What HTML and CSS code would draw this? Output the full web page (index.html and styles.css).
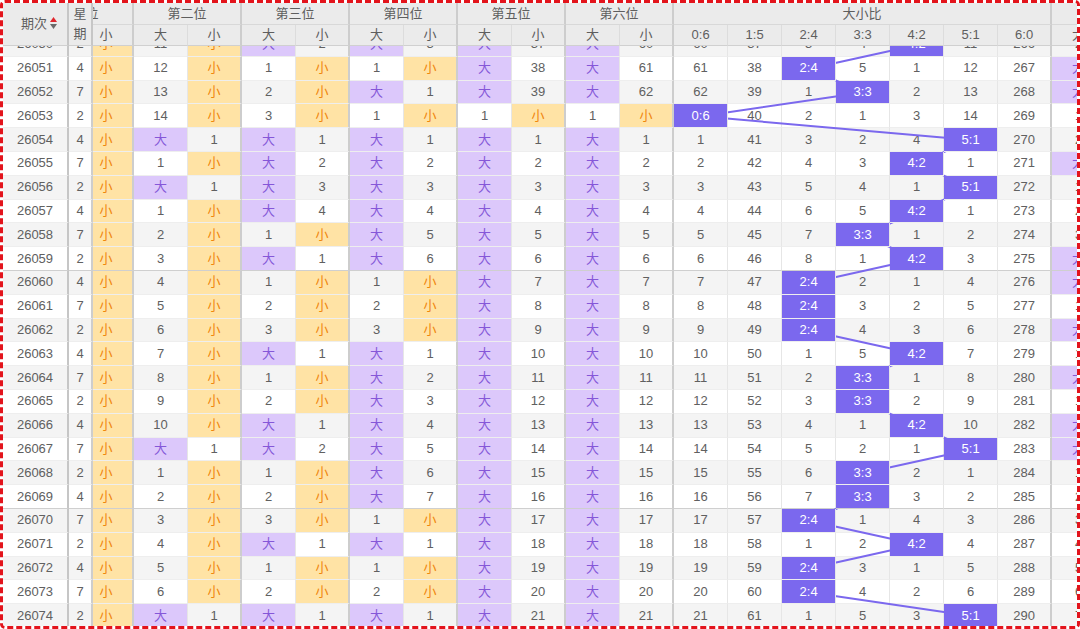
FILE: index.html
```html
<!DOCTYPE html>
<html lang="zh-CN">
<head>
<meta charset="utf-8">
<title>大小比走势</title>
<link rel="stylesheet" href="styles.css">
</head>
<body>
<div class="frame">
<div class="scroller" id="scroller">
<div class="sheet" id="sheet">
<svg class="trend" id="trend" width="1224" height="640"><polyline class="trend-line" id="trendLine" points=""/></svg>
<table class="grid">
<colgroup><col class="cp"><col class="cw"><col class="c"><col class="c"><col class="c"><col class="c"><col class="c"><col class="c"><col class="c"><col class="c"><col class="c"><col class="c"><col class="c"><col class="c"><col class="c"><col class="c"><col class="c"><col class="c"><col class="c"><col class="c"><col class="c"><col class="c"><col class="c"></colgroup>
<thead>
<tr class="r1">
<th rowspan="2" class="fz1 hp">期次<svg class="sort" width="7" height="12" viewBox="0 0 7 12"><polygon points="0,5 3.5,0 7,5" fill="#e0262d"/><polygon points="0,7 7,7 3.5,12" fill="#6a6a6a"/></svg></th>
<th rowspan="2" class="fz2 hw">星期</th>
<th colspan="2">第一位</th>
<th colspan="2">第二位</th>
<th colspan="2">第三位</th>
<th colspan="2">第四位</th>
<th colspan="2">第五位</th>
<th colspan="2">第六位</th>
<th colspan="7">大小比</th>
<th colspan="2">和值</th>
</tr>
<tr class="r2">
<th></th><th class="e">小</th><th>大</th><th class="e">小</th><th>大</th><th class="e">小</th><th>大</th><th class="e">小</th><th>大</th><th class="e">小</th><th>大</th><th class="e">小</th>
<th>0:6</th><th>1:5</th><th>2:4</th><th>3:3</th><th>4:2</th><th>5:1</th><th class="e">6:0</th>
<th>大</th><th class="e">小</th>
</tr>
</thead>
<tbody>
<tr><td>26050</td><td>2</td><td></td><td class="s">小</td><td>11</td><td class="s">小</td><td class="b">大</td><td>2</td><td class="b">大</td><td>3</td><td class="b">大</td><td>37</td><td class="b">大</td><td>60</td><td>60</td><td>37</td><td>3</td><td>4</td><td class="h">4:2</td><td>11</td><td>266</td><td>2</td><td class="s">小</td></tr>
<tr><td>26051</td><td>4</td><td></td><td class="s">小</td><td>12</td><td class="s">小</td><td>1</td><td class="s">小</td><td>1</td><td class="s">小</td><td class="b">大</td><td>38</td><td class="b">大</td><td>61</td><td>61</td><td>38</td><td class="h">2:4</td><td>5</td><td>1</td><td>12</td><td>267</td><td class="b">大</td><td>1</td></tr>
<tr><td>26052</td><td>7</td><td></td><td class="s">小</td><td>13</td><td class="s">小</td><td>2</td><td class="s">小</td><td class="b">大</td><td>1</td><td class="b">大</td><td>39</td><td class="b">大</td><td>62</td><td>62</td><td>39</td><td>1</td><td class="h">3:3</td><td>2</td><td>13</td><td>268</td><td class="b">大</td><td>2</td></tr>
<tr><td>26053</td><td>2</td><td></td><td class="s">小</td><td>14</td><td class="s">小</td><td>3</td><td class="s">小</td><td>1</td><td class="s">小</td><td>1</td><td class="s">小</td><td>1</td><td class="s">小</td><td class="h">0:6</td><td>40</td><td>2</td><td>1</td><td>3</td><td>14</td><td>269</td><td>1</td><td class="s">小</td></tr>
<tr><td>26054</td><td>4</td><td></td><td class="s">小</td><td class="b">大</td><td>1</td><td class="b">大</td><td>1</td><td class="b">大</td><td>1</td><td class="b">大</td><td>1</td><td class="b">大</td><td>1</td><td>1</td><td>41</td><td>3</td><td>2</td><td>4</td><td class="h">5:1</td><td>270</td><td>2</td><td class="s">小</td></tr>
<tr><td>26055</td><td>7</td><td></td><td class="s">小</td><td>1</td><td class="s">小</td><td class="b">大</td><td>2</td><td class="b">大</td><td>2</td><td class="b">大</td><td>2</td><td class="b">大</td><td>2</td><td>2</td><td>42</td><td>4</td><td>3</td><td class="h">4:2</td><td>1</td><td>271</td><td class="b">大</td><td>1</td></tr>
<tr><td>26056</td><td>2</td><td></td><td class="s">小</td><td class="b">大</td><td>1</td><td class="b">大</td><td>3</td><td class="b">大</td><td>3</td><td class="b">大</td><td>3</td><td class="b">大</td><td>3</td><td>3</td><td>43</td><td>5</td><td>4</td><td>1</td><td class="h">5:1</td><td>272</td><td>1</td><td class="s">小</td></tr>
<tr><td>26057</td><td>4</td><td></td><td class="s">小</td><td>1</td><td class="s">小</td><td class="b">大</td><td>4</td><td class="b">大</td><td>4</td><td class="b">大</td><td>4</td><td class="b">大</td><td>4</td><td>4</td><td>44</td><td>6</td><td>5</td><td class="h">4:2</td><td>1</td><td>273</td><td>2</td><td class="s">小</td></tr>
<tr><td>26058</td><td>7</td><td></td><td class="s">小</td><td>2</td><td class="s">小</td><td>1</td><td class="s">小</td><td class="b">大</td><td>5</td><td class="b">大</td><td>5</td><td class="b">大</td><td>5</td><td>5</td><td>45</td><td>7</td><td class="h">3:3</td><td>1</td><td>2</td><td>274</td><td>3</td><td class="s">小</td></tr>
<tr class="sep"><td>26059</td><td>2</td><td></td><td class="s">小</td><td>3</td><td class="s">小</td><td class="b">大</td><td>1</td><td class="b">大</td><td>6</td><td class="b">大</td><td>6</td><td class="b">大</td><td>6</td><td>6</td><td>46</td><td>8</td><td>1</td><td class="h">4:2</td><td>3</td><td>275</td><td class="b">大</td><td>1</td></tr>
<tr><td>26060</td><td>4</td><td></td><td class="s">小</td><td>4</td><td class="s">小</td><td>1</td><td class="s">小</td><td>1</td><td class="s">小</td><td class="b">大</td><td>7</td><td class="b">大</td><td>7</td><td>7</td><td>47</td><td class="h">2:4</td><td>2</td><td>1</td><td>4</td><td>276</td><td class="b">大</td><td>2</td></tr>
<tr><td>26061</td><td>7</td><td></td><td class="s">小</td><td>5</td><td class="s">小</td><td>2</td><td class="s">小</td><td>2</td><td class="s">小</td><td class="b">大</td><td>8</td><td class="b">大</td><td>8</td><td>8</td><td>48</td><td class="h">2:4</td><td>3</td><td>2</td><td>5</td><td>277</td><td>1</td><td class="s">小</td></tr>
<tr><td>26062</td><td>2</td><td></td><td class="s">小</td><td>6</td><td class="s">小</td><td>3</td><td class="s">小</td><td>3</td><td class="s">小</td><td class="b">大</td><td>9</td><td class="b">大</td><td>9</td><td>9</td><td>49</td><td class="h">2:4</td><td>4</td><td>3</td><td>6</td><td>278</td><td class="b">大</td><td>1</td></tr>
<tr><td>26063</td><td>4</td><td></td><td class="s">小</td><td>7</td><td class="s">小</td><td class="b">大</td><td>1</td><td class="b">大</td><td>1</td><td class="b">大</td><td>10</td><td class="b">大</td><td>10</td><td>10</td><td>50</td><td>1</td><td>5</td><td class="h">4:2</td><td>7</td><td>279</td><td>1</td><td class="s">小</td></tr>
<tr><td>26064</td><td>7</td><td></td><td class="s">小</td><td>8</td><td class="s">小</td><td>1</td><td class="s">小</td><td class="b">大</td><td>2</td><td class="b">大</td><td>11</td><td class="b">大</td><td>11</td><td>11</td><td>51</td><td>2</td><td class="h">3:3</td><td>1</td><td>8</td><td>280</td><td class="b">大</td><td>1</td></tr>
<tr><td>26065</td><td>2</td><td></td><td class="s">小</td><td>9</td><td class="s">小</td><td>2</td><td class="s">小</td><td class="b">大</td><td>3</td><td class="b">大</td><td>12</td><td class="b">大</td><td>12</td><td>12</td><td>52</td><td>3</td><td class="h">3:3</td><td>2</td><td>9</td><td>281</td><td>1</td><td class="s">小</td></tr>
<tr><td>26066</td><td>4</td><td></td><td class="s">小</td><td>10</td><td class="s">小</td><td class="b">大</td><td>1</td><td class="b">大</td><td>4</td><td class="b">大</td><td>13</td><td class="b">大</td><td>13</td><td>13</td><td>53</td><td>4</td><td>1</td><td class="h">4:2</td><td>10</td><td>282</td><td class="b">大</td><td>1</td></tr>
<tr><td>26067</td><td>7</td><td></td><td class="s">小</td><td class="b">大</td><td>1</td><td class="b">大</td><td>2</td><td class="b">大</td><td>5</td><td class="b">大</td><td>14</td><td class="b">大</td><td>14</td><td>14</td><td>54</td><td>5</td><td>2</td><td>1</td><td class="h">5:1</td><td>283</td><td class="b">大</td><td>2</td></tr>
<tr><td>26068</td><td>2</td><td></td><td class="s">小</td><td>1</td><td class="s">小</td><td>1</td><td class="s">小</td><td class="b">大</td><td>6</td><td class="b">大</td><td>15</td><td class="b">大</td><td>15</td><td>15</td><td>55</td><td>6</td><td class="h">3:3</td><td>2</td><td>1</td><td>284</td><td>1</td><td class="s">小</td></tr>
<tr class="sep"><td>26069</td><td>4</td><td></td><td class="s">小</td><td>2</td><td class="s">小</td><td>2</td><td class="s">小</td><td class="b">大</td><td>7</td><td class="b">大</td><td>16</td><td class="b">大</td><td>16</td><td>16</td><td>56</td><td>7</td><td class="h">3:3</td><td>3</td><td>2</td><td>285</td><td>2</td><td class="s">小</td></tr>
<tr><td>26070</td><td>7</td><td></td><td class="s">小</td><td>3</td><td class="s">小</td><td>3</td><td class="s">小</td><td>1</td><td class="s">小</td><td class="b">大</td><td>17</td><td class="b">大</td><td>17</td><td>17</td><td>57</td><td class="h">2:4</td><td>1</td><td>4</td><td>3</td><td>286</td><td>3</td><td class="s">小</td></tr>
<tr><td>26071</td><td>2</td><td></td><td class="s">小</td><td>4</td><td class="s">小</td><td class="b">大</td><td>1</td><td class="b">大</td><td>1</td><td class="b">大</td><td>18</td><td class="b">大</td><td>18</td><td>18</td><td>58</td><td>1</td><td>2</td><td class="h">4:2</td><td>4</td><td>287</td><td>4</td><td class="s">小</td></tr>
<tr><td>26072</td><td>4</td><td></td><td class="s">小</td><td>5</td><td class="s">小</td><td>1</td><td class="s">小</td><td>1</td><td class="s">小</td><td class="b">大</td><td>19</td><td class="b">大</td><td>19</td><td>19</td><td>59</td><td class="h">2:4</td><td>3</td><td>1</td><td>5</td><td>288</td><td>5</td><td class="s">小</td></tr>
<tr><td>26073</td><td>7</td><td></td><td class="s">小</td><td>6</td><td class="s">小</td><td>2</td><td class="s">小</td><td>2</td><td class="s">小</td><td class="b">大</td><td>20</td><td class="b">大</td><td>20</td><td>20</td><td>60</td><td class="h">2:4</td><td>4</td><td>2</td><td>6</td><td>289</td><td>6</td><td class="s">小</td></tr>
<tr><td>26074</td><td>2</td><td></td><td class="s">小</td><td class="b">大</td><td>1</td><td class="b">大</td><td>1</td><td class="b">大</td><td>1</td><td class="b">大</td><td>21</td><td class="b">大</td><td>21</td><td>21</td><td>61</td><td>1</td><td>5</td><td>3</td><td class="h">5:1</td><td>290</td><td>7</td><td class="s">小</td></tr>
</tbody>
</table>
</div>
</div>
</div>
<script src="app.js"></script>
</body>
</html>
```

FILE: styles.css
```css
* { box-sizing: border-box; }
html, body { margin: 0; padding: 0; background: #fff; }
body {
  font-family: "Liberation Sans", "Noto Sans CJK SC", sans-serif;
  font-size: 13px;
  color: #606060;
}
.frame {
  width: 1080px;
  height: 629px;
  border: 3px dashed #e3141c;
  border-radius: 5px;
  overflow: hidden;
}
.scroller {
  width: 100%;
  height: 100%;
  overflow: hidden;
}
.sheet {
  position: relative;
  width: max-content;
}
.trend {
  position: absolute;
  left: 0;
  top: 0;
  z-index: 1;
  pointer-events: none;
}
.trend-line {
  fill: none;
  stroke: #7b68ee;
  stroke-width: 2;
  stroke-linejoin: round;
}
.grid {
  border-collapse: separate;
  border-spacing: 0;
  table-layout: fixed;
  width: 1224px;
}
col.cp { width: 66px; }
col.cw { width: 24px; }
col.c { width: 54px; }

.grid th, .grid td {
  padding: 0;
  text-align: center;
  vertical-align: middle;
  white-space: nowrap;
  overflow: hidden;
  line-height: 16px;
}

/* header */
.grid thead th {
  position: sticky;
  top: 0;
  z-index: 4;
  background: #ebebeb;
  color: #5e5e5e;
  font-weight: normal;
  border-bottom: 1px solid #d8d8d8;
  border-right: 2px solid #cdcdcd;
}
.grid tr.r1 th { height: 22px; }
.grid tr.r2 th {
  top: 22px;
  height: 21px;
  border-right: 1px solid #dcdcdc;
  border-bottom: 1px solid #d0d0d0;
}
.grid tr.r2 th.e { border-right: 2px solid #cdcdcd; }
.grid thead th.fz1 {
  left: 0;
  z-index: 6;
  padding-left: 8px;
  border-right: 2px solid #c6c6c6;
  border-bottom: 1px solid #d0d0d0;
}
.grid thead th.fz2 {
  left: 66px;
  z-index: 6;
  white-space: normal;
  line-height: 20px;
  padding: 0 4px;
  border-right: 2px solid #c6c6c6;
  border-bottom: 1px solid #d0d0d0;
}
.sort {
  display: inline-block;
  vertical-align: -1px;
  margin-left: 3px;
}

/* body */
.grid tbody tr { height: 23.8px; }
.grid tbody td {
  background: #fff;
  border-right: 1px solid #e6e6e6;
  border-bottom: 1px solid #eeeeee;
}
.grid tbody tr:nth-child(odd) td { background: #f4f4f4; }
.grid tbody tr.sep td { border-bottom: 1px solid #cfcfcf; }
.grid tbody td:nth-child(-n+14):nth-child(even),
.grid tbody td:nth-child(21),
.grid tbody td:nth-child(23) {
  border-right: 2px solid #cdcdcd;
}
.grid tbody td:nth-child(1) {
  position: sticky;
  left: 0;
  z-index: 3;
  border-right: 2px solid #c6c6c6;
}
.grid tbody td:nth-child(2) {
  position: sticky;
  left: 66px;
  z-index: 3;
  border-right: 2px solid #c6c6c6;
}
.grid tbody tr td.b {
  background: #dcc8fb;
  color: #8557d8;
}
.grid tbody tr td.s {
  background: #ffe3a5;
  color: #f0860c;
}
.grid tbody tr td.h {
  position: relative;
  z-index: 2;
  background: #7b68ee;
  color: #fff;
}
```

FILE: app.js
```js
(function () {
  var sheet = document.getElementById('sheet');
  var svg = document.getElementById('trend');
  var line = document.getElementById('trendLine');
  var base = sheet.getBoundingClientRect();
  svg.setAttribute('width', sheet.offsetWidth);
  svg.setAttribute('height', sheet.offsetHeight);
  var pts = [];
  var hits = sheet.querySelectorAll('td.h');
  for (var i = 0; i < hits.length; i++) {
    var r = hits[i].getBoundingClientRect();
    pts.push((r.left - base.left + r.width / 2).toFixed(1) + ',' + (r.top - base.top + r.height / 2).toFixed(1));
  }
  line.setAttribute('points', pts.join(' '));
  var sc = document.getElementById('scroller');
  sc.scrollLeft = 67;
  sc.scrollTop = 13;
})();
```
